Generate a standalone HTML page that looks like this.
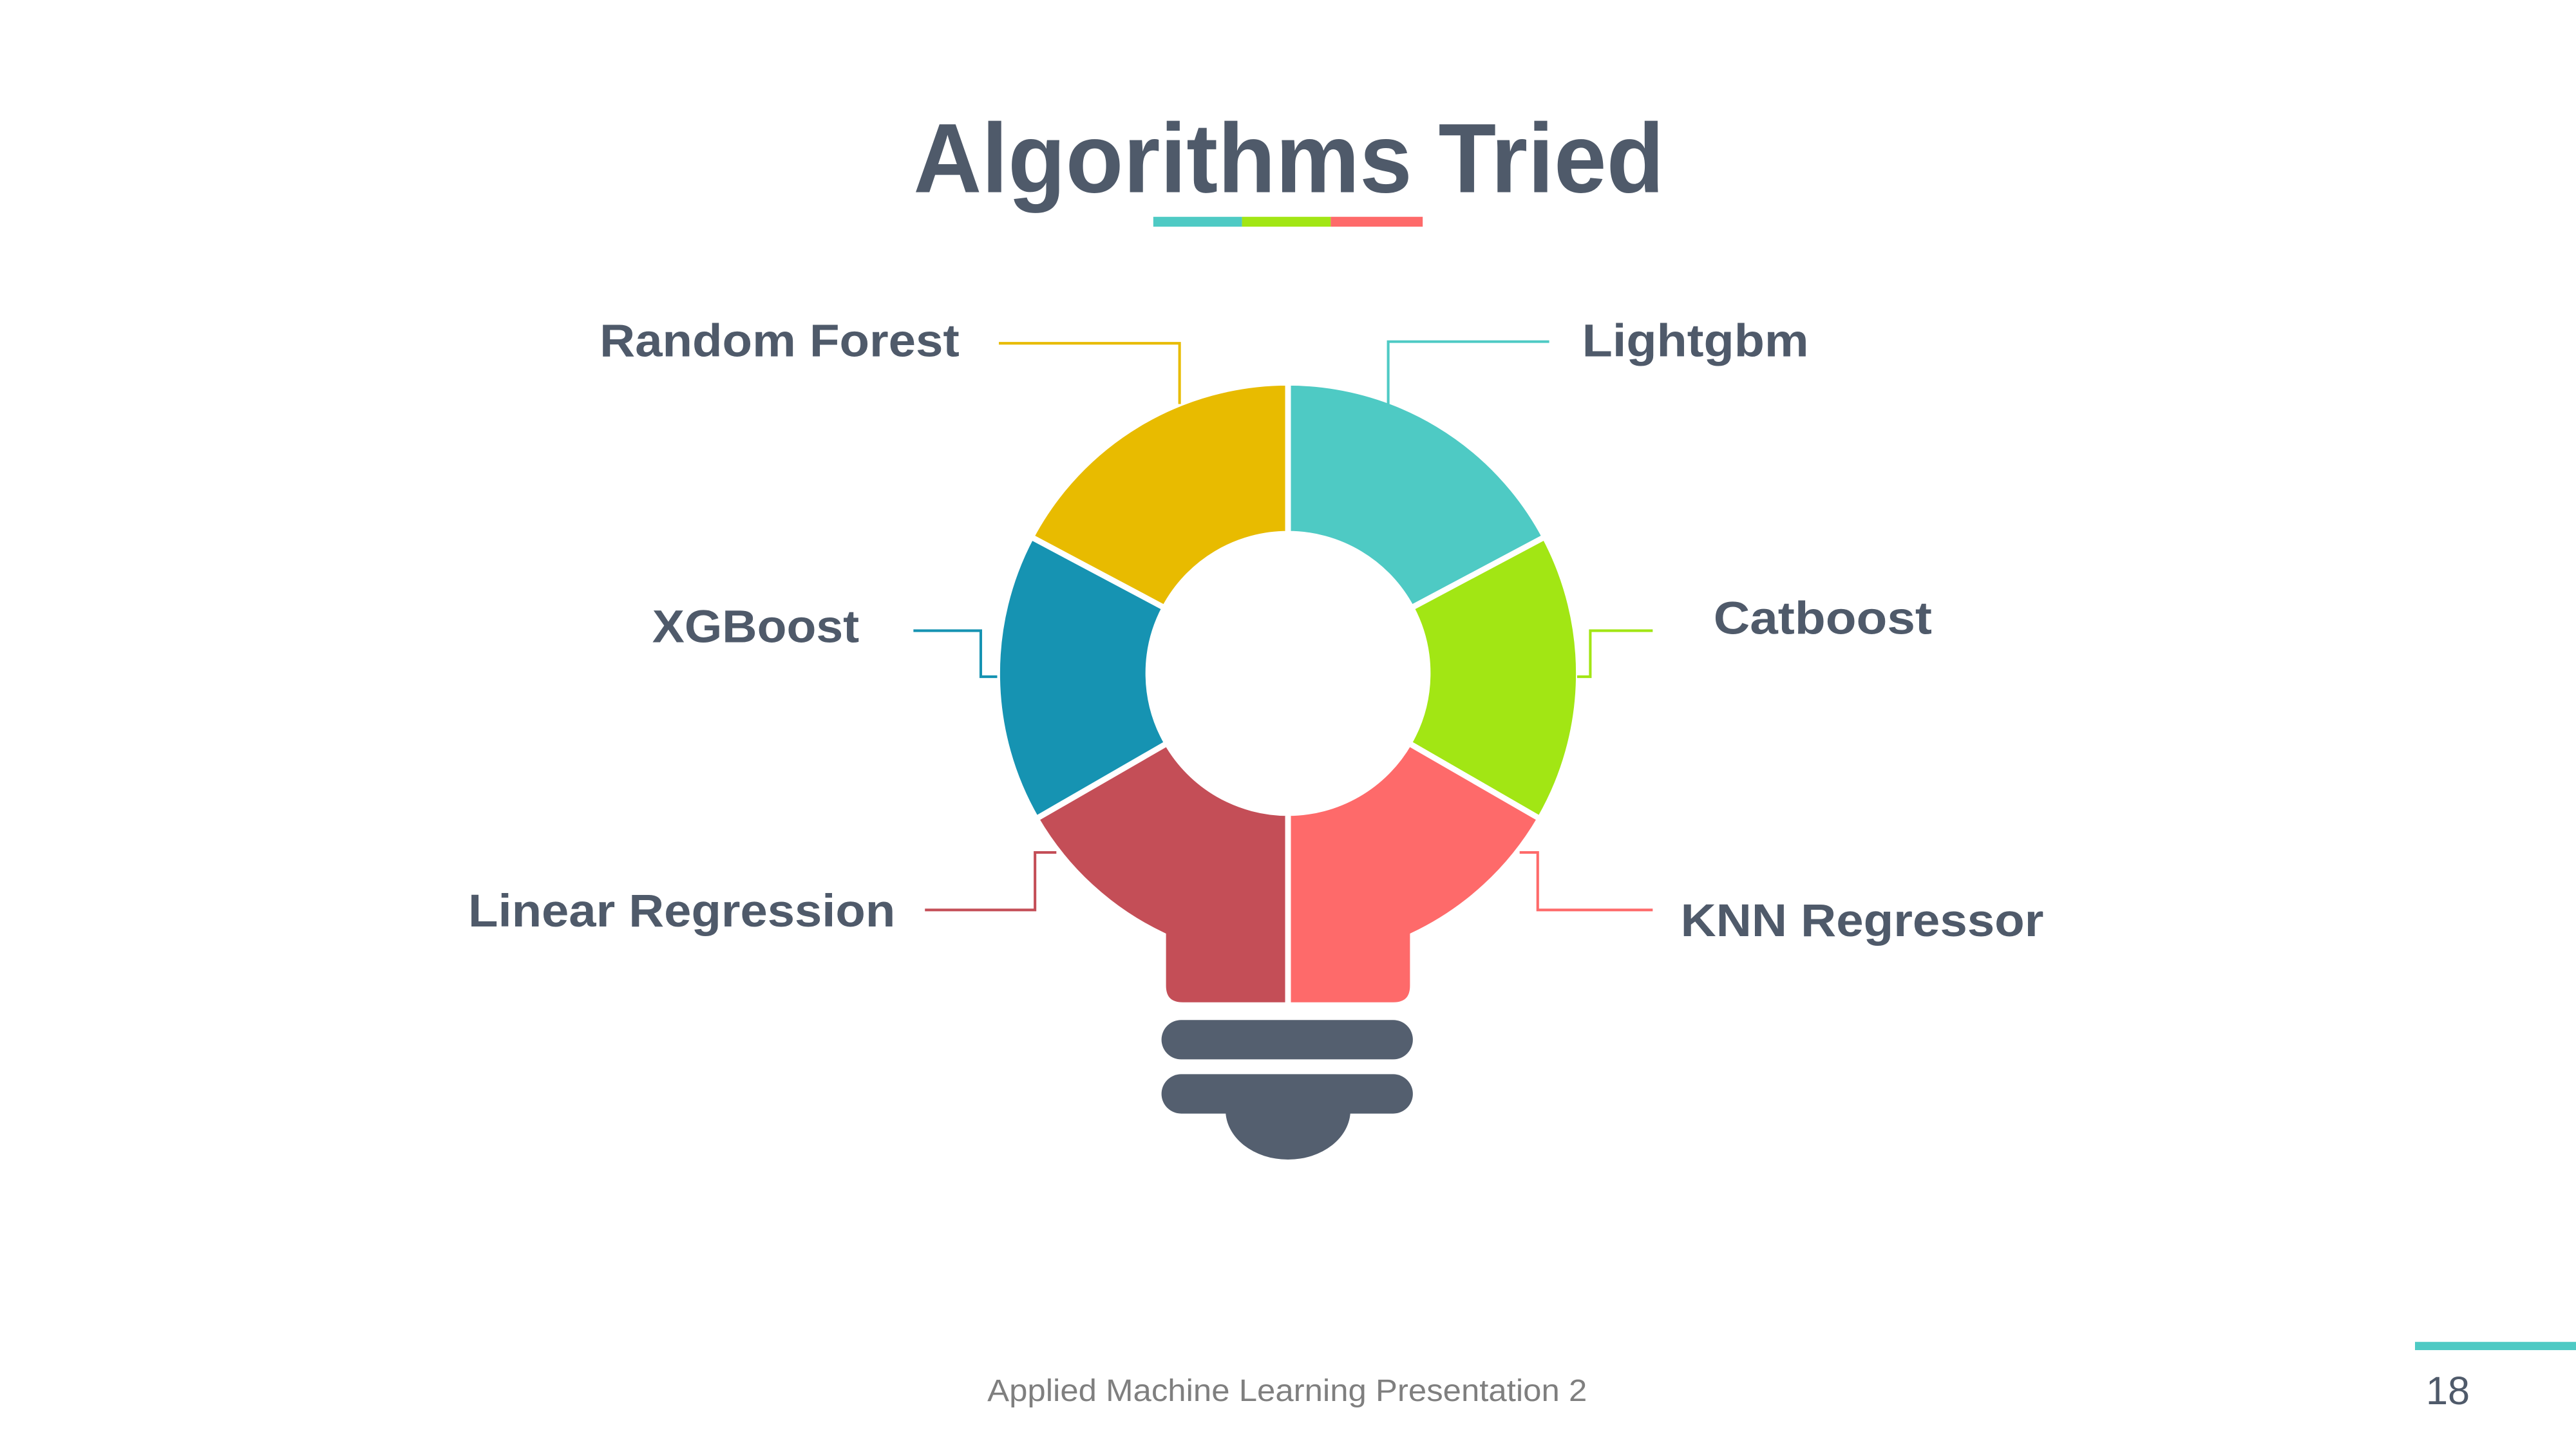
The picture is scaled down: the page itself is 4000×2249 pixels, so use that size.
<!DOCTYPE html>
<html><head><meta charset="utf-8"><style>
html,body{margin:0;padding:0;background:#fff;width:4000px;height:2249px;overflow:hidden}
svg{display:block}
text{font-family:"Liberation Sans",sans-serif}
</style></head><body>
<svg width="4000" height="2249" viewBox="0 0 1568 881.6" xmlns="http://www.w3.org/2000/svg">
<rect width="1568" height="881.6" fill="#fff"/>
<text x="556" y="117" textLength="457" lengthAdjust="spacingAndGlyphs" font-size="60" font-weight="bold" fill="#4f5a6a">Algorithms Tried</text>
<rect x="702" y="132" width="54" height="6" fill="#4ecac4"/>
<rect x="756" y="132" width="54" height="6" fill="#a2e614"/>
<rect x="810" y="132" width="56" height="6" fill="#fe6a6a"/>

<g stroke="#fff" stroke-width="3.5" stroke-linejoin="miter">
<path d="M784,233 A177,177 0 0 1 940.3,326.9 L859.1,370.1 A85,85 0 0 0 784,325 Z" fill="#4ecac4"/>
<path d="M940.3,326.9 A177,177 0 0 1 937.3,498.5 L857.6,452.5 A85,85 0 0 0 859.1,370.1 Z" fill="#a2e614"/>
<path d="M937.3,498.5 A177,177 0 0 1 860,569.5 L860,600 Q860,612 848,612 L784,612 L784,495 A85,85 0 0 0 857.6,452.5 Z" fill="#fe6a6a"/>
<path d="M630.7,498.5 A177,177 0 0 0 708,569.5 L708,600 Q708,612 720,612 L784,612 L784,495 A85,85 0 0 1 710.4,452.5 Z" fill="#c44e57"/>
<path d="M627.7,326.9 A177,177 0 0 0 630.7,498.5 L710.4,452.5 A85,85 0 0 1 708.9,370.1 Z" fill="#1693b2"/>
<path d="M784,233 A177,177 0 0 0 627.7,326.9 L708.9,370.1 A85,85 0 0 1 784,325 Z" fill="#e8bb00"/>
</g>

<rect x="707" y="621" width="153" height="24" rx="12" fill="#545f6f"/>
<rect x="707" y="654" width="153" height="24" rx="12" fill="#545f6f"/>
<path d="M746,676 L822,676 A38,30 0 0 1 746,676 Z" fill="#545f6f"/>

<g fill="none" stroke-width="1.6">
<path d="M608,209 H718 V246" stroke="#e8bb00"/>
<path d="M943,208 H845 V246" stroke="#4ecac4"/>
<path d="M556,384 H597 V412 H607" stroke="#1693b2"/>
<path d="M1006,384 H968 V412 H960" stroke="#a2e614"/>
<path d="M563,554 H630 V519 H643" stroke="#c44e57"/>
<path d="M1006,554 H936 V519 H925" stroke="#fe6a6a"/>
</g>

<g font-size="28" font-weight="bold" fill="#4f5a6a" lengthAdjust="spacingAndGlyphs">
<text x="365" y="217" textLength="219" lengthAdjust="spacingAndGlyphs">Random Forest</text>
<text x="963" y="217" textLength="138" lengthAdjust="spacingAndGlyphs">Lightgbm</text>
<text x="397" y="391" textLength="126" lengthAdjust="spacingAndGlyphs">XGBoost</text>
<text x="1043" y="386" textLength="133" lengthAdjust="spacingAndGlyphs">Catboost</text>
<text x="285" y="564" textLength="260" lengthAdjust="spacingAndGlyphs">Linear Regression</text>
<text x="1023" y="570" textLength="221" lengthAdjust="spacingAndGlyphs">KNN Regressor</text>
</g>

<text x="601" y="853" textLength="365" lengthAdjust="spacingAndGlyphs" font-size="19" fill="#7f7f7f">Applied Machine Learning Presentation 2</text>
<rect x="1470" y="817" width="98" height="5" fill="#4ecac4"/>
<text x="1490" y="855" text-anchor="middle" font-size="24" fill="#4f5a6a">18</text>
</svg>
</body></html>
